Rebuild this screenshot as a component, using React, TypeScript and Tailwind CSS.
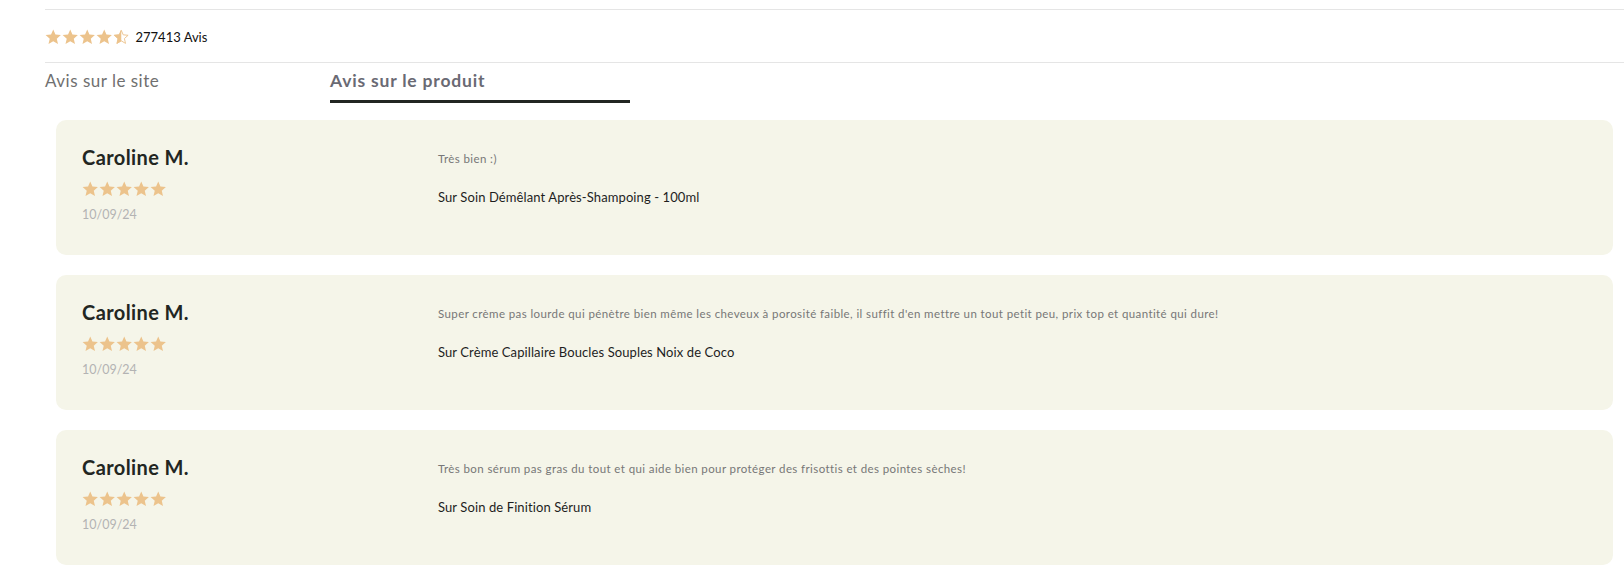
import React from "react";

const REVIEWS = [
  { id: 1, name: "Caroline M.", date: "10/09/24", text: "Très bien :)", product: "Sur Soin Démêlant Après-Shampoing - 100ml" },
  {
    id: 2,
    name: "Caroline M.",
    date: "10/09/24",
    text: "Super crème pas lourde qui pénètre bien même les cheveux à porosité faible, il suffit d'en mettre un tout petit peu, prix top et quantité qui dure!",
    product: "Sur Crème Capillaire Boucles Souples Noix de Coco",
  },
  {
    id: 3,
    name: "Caroline M.",
    date: "10/09/24",
    text: "Très bon sérum pas gras du tout et qui aide bien pour protéger des frisottis et des pointes sèches!",
    product: "Sur Soin de Finition Sérum",
  },
];

const STAR = "M12 0.8l3.2 7.3 7.9.7-6 5.3 1.8 7.8L12 17.8l-6.9 4.1 1.8-7.8-6-5.3 7.9-.7z";

function Star({ size, half }: { size: number; half?: boolean }) {
  return (
    <svg width={size} height={size} viewBox="0 0 24 24" className="flex-shrink-0">
      {half ? (
        <>
          <defs>
            <clipPath id="half-clip">
              <rect x="0" y="0" width="12" height="24" />
            </clipPath>
          </defs>
          <path d={STAR} fill="none" stroke="#ecc38c" strokeWidth="1.5" strokeLinejoin="round" transform="translate(1.2 1.2) scale(0.9)" />
          <path d={STAR} fill="#ecc38c" clipPath="url(#half-clip)" />
        </>
      ) : (
        <path d={STAR} fill="#ecc38c" />
      )}
    </svg>
  );
}

export default function App() {
  return (
    <div className="min-h-screen bg-white pl-[45px] pt-[9px]" style={{ fontFamily: "Lato, 'Noto Sans', sans-serif" }}>
      <div className="border-t border-[#e5e5e5]" />

      {/* Rating summary */}
      <div className="flex items-center h-[52px] pt-[3px]">
        <div className="flex items-center gap-[0.5px]">
          {[0, 1, 2, 3].map((i) => (
            <Star key={i} size={16.5} />
          ))}
          <Star size={16.5} half />
        </div>
        <span className="ml-[6px] text-[13px] text-[#111]">277413 Avis</span>
      </div>

      <div className="border-t border-[#e5e5e5]" />

      {/* Tabs */}
      <div className="flex items-end h-[40px]">
        <div className="w-[285px] pb-[11px] text-[17px] leading-[22px] tracking-[0.5px] text-[#707070]">Avis sur le site</div>
        <div className="w-[300px] pb-[8px] border-b-[3px] border-[#222622] text-[17.5px] leading-[22px] font-bold tracking-[0.8px] text-[#6a6a74]">
          Avis sur le produit
        </div>
      </div>

      {/* Review cards */}
      <div className="flex flex-col gap-[20.5px] pt-[17px] pl-[11px] pr-[11px]">
        {REVIEWS.map((r) => (
          <div key={r.id} className="flex h-[134.5px] rounded-[10px] bg-[#f5f5e9] pl-[26px] pt-[25px]">
            <div className="w-[356px] flex-shrink-0">
              <p className="text-[20px] font-bold leading-[24px] tracking-[0.4px] text-[#222622]">{r.name}</p>
              <div className="flex mt-[12px] gap-[0.5px]">
                {[0, 1, 2, 3, 4].map((i) => (
                  <Star key={i} size={16.5} />
                ))}
              </div>
              <p className="mt-[9px] text-[12.5px] leading-[16px] text-[#b3b3b3]">{r.date}</p>
            </div>
            <div className="flex-1 pt-[7px]">
              <p className="text-[11.5px] leading-[14px] tracking-[0.4px] text-[#777]">{r.text}</p>
              <p className="mt-[23px] text-[13px] leading-[16px] tracking-[0.1px] text-[#1e1e1e]">{r.product}</p>
            </div>
          </div>
        ))}
      </div>
    </div>
  );
}
